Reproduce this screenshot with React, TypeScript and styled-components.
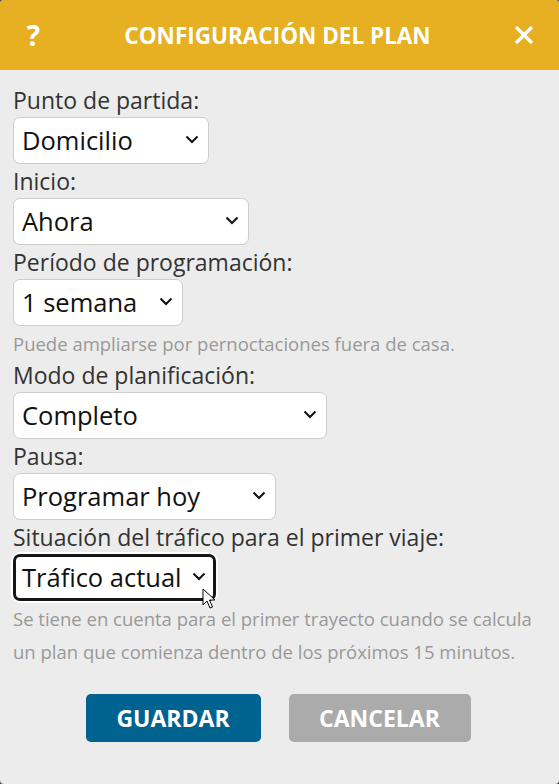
import React from "react";
import styled, { createGlobalStyle } from "styled-components";

const Global = createGlobalStyle`
  html, body { margin: 0; padding: 0; background: #4a4a4a; }
  body { font-family: "Open Sans", "Noto Sans", sans-serif; }
  * { box-sizing: border-box; }
`;

const Panel = styled.div`
  width: 559px;
  height: 784px;
  background: #ececec;
  border-radius: 4px;
  overflow: hidden;
  display: flex;
  flex-direction: column;
  position: relative;
`;

const Header = styled.div`
  height: 70px;
  background: #e6b022;
  display: grid;
  grid-template-columns: 67px 1fr 71px;
  align-items: center;
  color: #fff;
`;

const HeaderIcon = styled.div`
  display: flex;
  justify-content: center;
  align-items: center;
  font-weight: 700;
  font-size: 28px;
  line-height: 1;
`;

const Title = styled.div`
  text-align: center;
  font-weight: 700;
  font-size: 22.5px;
`;

const Body = styled.div`
  padding: 13px 13px 0 13px;
  display: flex;
  flex-direction: column;
  align-items: flex-start;
`;

const Label = styled.div`
  font-size: 23px;
  line-height: 34px;
  color: #333;
`;

const Hint = styled.div<{ $lh: number; $pad: number }>`
  font-size: 18.5px;
  line-height: ${(p) => p.$lh}px;
  padding-top: ${(p) => p.$pad}px;
  color: #999;
`;

const Select = styled.div<{ $w: number; $focus?: boolean }>`
  width: ${(p) => p.$w}px;
  height: 47px;
  background: #fff;
  border: ${(p) => (p.$focus ? "3px solid #161616" : "1px solid #cdcdcd")};
  border-radius: 7px;
  box-shadow: ${(p) => (p.$focus ? "0 0 0 2px #fff" : "none")};
  display: flex;
  align-items: center;
  justify-content: space-between;
  padding: 0 ${(p) => (p.$focus ? 6 : 8)}px 2px;
  font-size: 25.5px;
  color: #111;
  white-space: nowrap;
`;

const Chevron = styled.svg`
  width: 14px;
  height: 9px;
  margin-right: 1px;
  flex: none;
`;

const Buttons = styled.div`
  display: flex;
  justify-content: center;
  gap: 28px;
  padding-top: 26px;
  padding-right: 3px;
`;

const Button = styled.button<{ $primary?: boolean }>`
  height: 48px;
  border: none;
  border-radius: 5px;
  background: ${(p) => (p.$primary ? "#00628f" : "#ababab")};
  color: #fff;
  font-family: "Open Sans", sans-serif;
  font-weight: 700;
  font-size: 23px;
  width: ${(p) => (p.$primary ? 175 : 182)}px;
  padding: 0;
`;

const Cursor = styled.svg`
  position: absolute;
  left: 202px;
  top: 588px;
  width: 14px;
  height: 22px;
`;

function Drop({ text, w, focus }: { text: string; w: number; focus?: boolean }) {
  return (
    <Select $w={w} $focus={focus}>
      <span>{text}</span>
      <Chevron viewBox="0 0 14 9">
        <path d="M1.5 1.5 L7 7 L12.5 1.5" fill="none" stroke="#111" strokeWidth="2" />
      </Chevron>
    </Select>
  );
}

export default function App() {
  return (
    <>
      <Global />
      <Panel>
        <Header>
          <HeaderIcon>?</HeaderIcon>
          <Title>CONFIGURACIÓN DEL PLAN</Title>
          <HeaderIcon>
            <svg width="20" height="20" viewBox="0 0 20 20">
              <path d="M2 2 L18 18 M18 2 L2 18" stroke="#fff" strokeWidth="3.2" />
            </svg>
          </HeaderIcon>
        </Header>
        <Body>
          <Label>Punto de partida:</Label>
          <Drop text="Domicilio" w={196} />
          <Label>Inicio:</Label>
          <Drop text="Ahora" w={236} />
          <Label>Período de programación:</Label>
          <Drop text="1 semana" w={170} />
          <Hint $lh={29} $pad={3}>Puede ampliarse por pernoctaciones fuera de casa.</Hint>
          <Label>Modo de planificación:</Label>
          <Drop text="Completo" w={314} />
          <Label>Pausa:</Label>
          <Drop text="Programar hoy" w={263} />
          <Label>Situación del tráfico para el primer viaje:</Label>
          <Drop text="Tráfico actual" w={203} focus />
          <Hint $lh={33} $pad={1}>
            Se tiene en cuenta para el primer trayecto cuando se calcula
            <br />
            un plan que comienza dentro de los próximos 15 minutos.
          </Hint>
        </Body>
        <Buttons>
          <Button $primary>GUARDAR</Button>
          <Button>CANCELAR</Button>
        </Buttons>
        <Cursor viewBox="0 0 14 22">
          <path d="M1 1 L1 17 L5 13 L8 20 L10.5 19 L7.5 12 L13 12 Z" fill="#fff" stroke="#000" strokeWidth="1" strokeLinejoin="round" />
        </Cursor>
      </Panel>
    </>
  );
}
